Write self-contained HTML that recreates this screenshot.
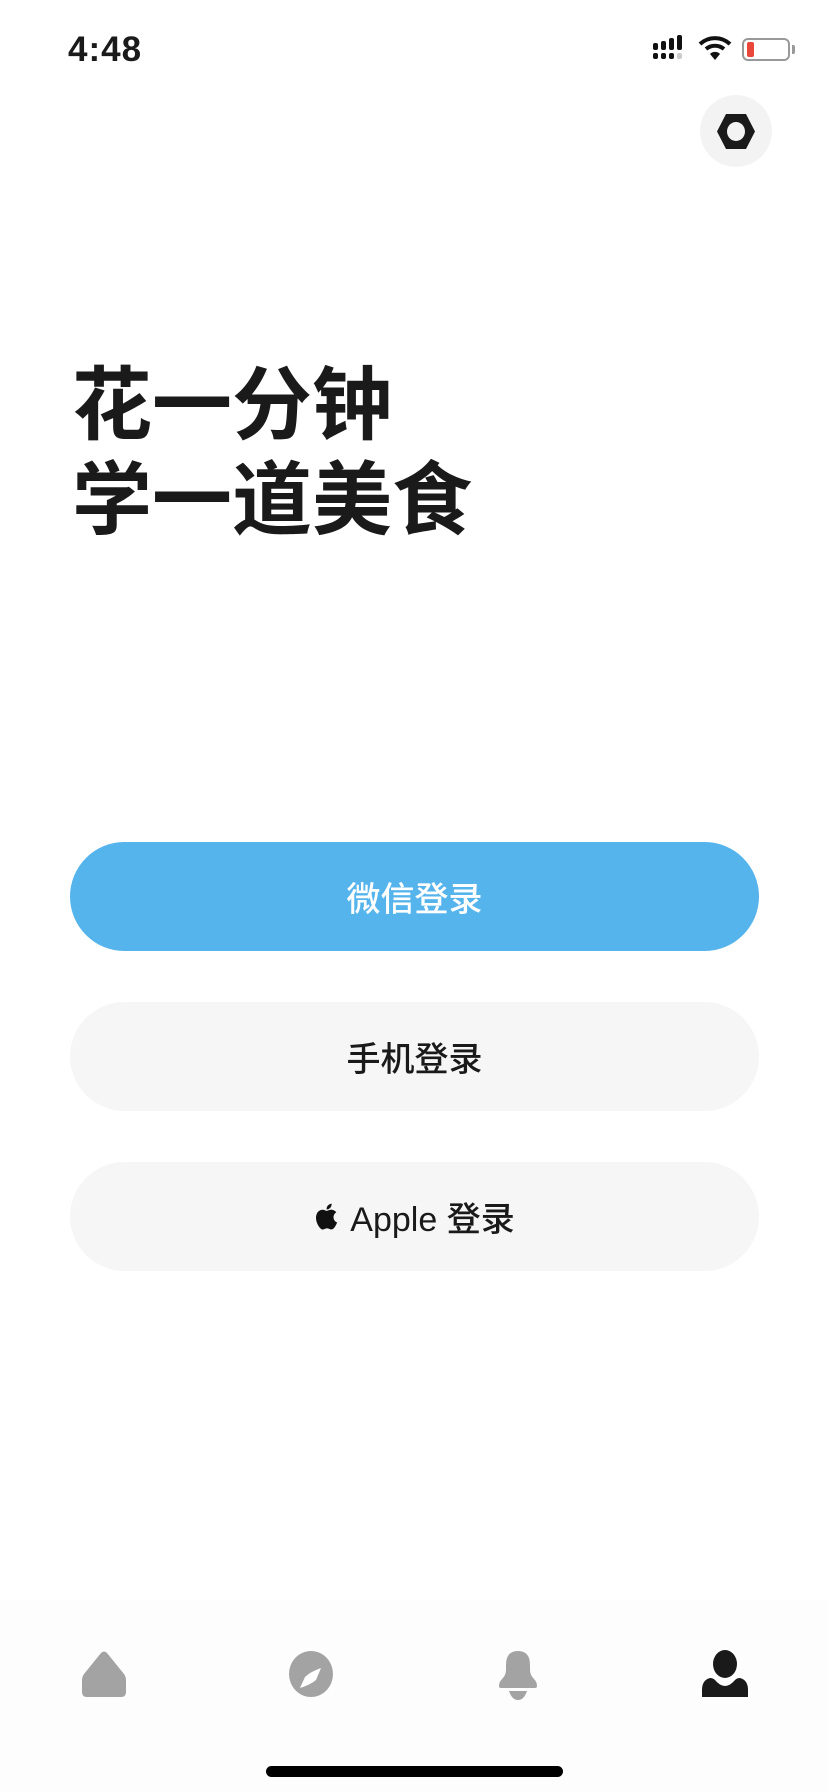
<!DOCTYPE html>
<html><head><meta charset="utf-8"><style>
*{margin:0;padding:0;box-sizing:border-box}
body{width:828px;height:1792px;background:#fff;position:relative;overflow:hidden;font-family:"Liberation Sans","Noto Sans CJK SC",sans-serif;color:#1a1a1a}
.time{position:absolute;left:68px;top:30px;font-size:35px;font-weight:600;letter-spacing:1px}
.title{position:absolute;left:72px;top:358px;font-size:80px;font-weight:700;line-height:95px;letter-spacing:0}
.btn{position:absolute;left:70px;width:689px;height:109px;border-radius:55px;display:flex;align-items:center;justify-content:center;font-size:34px;font-weight:500}
.tab{position:absolute;top:1650px}
</style></head><body>
<div class="time">4:48</div>
<svg style="position:absolute;left:652px;top:34px" width="36" height="28" viewBox="0 0 36 28">
<g fill="#111"><rect x="1" y="9" width="5" height="7" rx="2"/><rect x="9" y="7" width="5" height="9" rx="2"/><rect x="17" y="4" width="5" height="12" rx="2"/><rect x="25" y="1" width="5" height="15" rx="2"/>
<rect x="1" y="19" width="5" height="6" rx="2"/><rect x="9" y="19" width="5" height="6" rx="2"/><rect x="17" y="19" width="5" height="6" rx="2"/></g><rect x="25" y="19" width="5" height="6" rx="2" fill="#ccc"/></svg>
<svg style="position:absolute;left:698px;top:35px" width="34" height="26" viewBox="0 0 34 26">
<path d="M2 9 A22 22 0 0 1 32 9" stroke="#111" stroke-width="4" fill="none"/><path d="M8 14 A14 14 0 0 1 26 14" stroke="#111" stroke-width="4" fill="none"/><path d="M12 19 L17 25 L22 19 A7 7 0 0 0 12 19Z" fill="#111"/></svg>
<div style="position:absolute;left:742px;top:38px;width:48px;height:23px;border:2px solid #999;border-radius:6px"></div>
<div style="position:absolute;left:747px;top:42px;width:7px;height:15px;background:#e8473a;border-radius:2px"></div>
<div style="position:absolute;left:792px;top:45px;width:3px;height:9px;background:#999;border-radius:0 2px 2px 0"></div>
<div style="position:absolute;left:700px;top:95px;width:72px;height:72px;border-radius:50%;background:#f3f3f3"></div>
<svg style="position:absolute;left:716px;top:113px" width="40" height="37" viewBox="0 0 40 37">
<path d="M10 1 H30 L39 18.5 L30 36 H10 L1 18.5Z" fill="#1a1a1a"/><ellipse cx="20" cy="18.5" rx="9" ry="9.5" fill="#f3f3f3"/></svg>
<div class="title">花一分钟<br>学一道美食</div>
<div class="btn" style="top:842px;background:#56b4ec;color:#fff">微信登录</div>
<div class="btn" style="top:1002px;background:#f6f6f6">手机登录</div>
<div class="btn" style="top:1162px;background:#f6f6f6"><svg width="24" height="29" viewBox="0 0 24 29" style="margin-right:12px"><path d="M19.5 15.3c0-3.3 2.7-4.9 2.8-5-1.5-2.2-3.9-2.5-4.7-2.6-2-.2-3.900 1.200-4.900 1.200s-2.600-1.200-4.300-1.100C6.200 7.900 4.200 9.200 3.100 11.100c-2.300 4-.6 9.900 1.600 13.100 1.100 1.600 2.400 3.300 4.100 3.300 1.600-.1 2.300-1.100 4.300-1.100s2.500 1.100 4.300 1 2.800-1.600 3.900-3.200c1.200-1.800 1.700-3.600 1.800-3.700-.1 0-3.500-1.300-3.600-5.200zM16.300 5.700c.9-1.100 1.500-2.600 1.300-4.100-1.300.1-2.800.9-3.700 1.900-.8.900-1.500 2.500-1.300 3.900 1.400.1 2.800-.7 3.700-1.700z" fill="#111"/></svg>Apple 登录</div>
<div style="position:absolute;left:0;top:1600px;width:828px;height:192px;background:#fdfdfd"></div>
<svg class="tab" style="left:82px" width="44" height="48" viewBox="0 0 44 48"><path d="M19 3 Q22 0 25 3 L42 24 Q44 27 44 30 V42 Q44 47 39 47 H5 Q0 47 0 42 V30 Q0 27 2 24Z" fill="#a3a3a3"/></svg>
<svg class="tab" style="left:288px" width="46" height="48" viewBox="0 0 46 48"><ellipse cx="23" cy="24" rx="22" ry="23" fill="#a3a3a3"/><path d="M33 18 L28 30 Q22 35 12 38 L17 27 Q22 22 33 18Z" fill="#fff"/></svg>
<svg class="tab" style="left:496px" width="44" height="50" viewBox="0 0 44 50"><path d="M22 1 Q34 1 34 15 V20 Q34 25 38 29 Q41 32 41 36 Q41 38 39 38 H5 Q3 38 3 36 Q3 32 6 29 Q10 25 10 20 V15 Q10 1 22 1Z" fill="#a3a3a3"/><path d="M13 41 H31 Q28 50 22 50 Q16 50 13 41Z" fill="#a3a3a3"/></svg>
<svg class="tab" style="left:702px" width="46" height="48" viewBox="0 0 46 48"><ellipse cx="23" cy="14" rx="12" ry="14" fill="#1a1a1a"/><path d="M0 40 Q0 30 8 28 Q11 28 13 30 Q18 36 23 36 Q28 36 33 30 Q35 28 38 28 Q46 30 46 40 V47 H0Z" fill="#1a1a1a"/></svg>
<div style="position:absolute;left:266px;top:1766px;width:297px;height:11px;border-radius:6px;background:#000"></div>
</body></html>
